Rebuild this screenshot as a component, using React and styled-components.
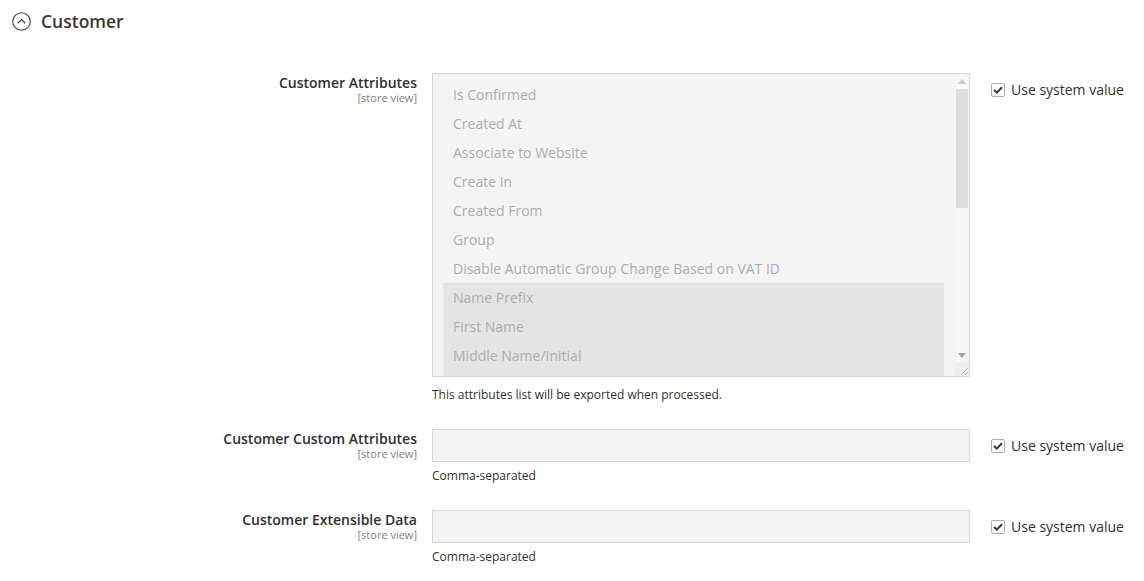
import React from "react";
import styled, { createGlobalStyle } from "styled-components";

const Global = createGlobalStyle`
  html, body { margin: 0; padding: 0; background: #fff; }
  body { font-family: "Open Sans", "Noto Sans", sans-serif; color: #303030; }
`;

const Page = styled.div`
  width: 1144px;
  min-height: 581px;
  background: #fff;
`;

const Header = styled.div`
  display: flex;
  align-items: center;
  gap: 10px;
  height: 42px;
  padding-left: 12px;
`;

const Title = styled.div`
  font-size: 17.5px;
  font-weight: 600;
  color: #41362f;
  line-height: 20px;
`;

const Fieldset = styled.div`
  margin-top: 31px;
  display: flex;
  flex-direction: column;
  gap: 25px;
`;

const Field = styled.div`
  display: grid;
  grid-template-columns: 432px 538px 1fr;
  align-items: start;
`;

const LabelCell = styled.div`
  padding-right: 15px;
  padding-top: 1px;
  text-align: right;
`;

const LabelText = styled.div`
  font-size: 14px;
  font-weight: 600;
  line-height: 18px;
  color: #303030;
`;

const Scope = styled.div`
  font-size: 11px;
  line-height: 13px;
  color: #808080;
  margin-top: -1px;
`;

const Control = styled.div`
  display: flex;
  flex-direction: column;
`;

const SelectBox = styled.div`
  height: 302px;
  border: 1px solid #d6d6d6;
  background: #f4f4f4;
  display: flex;
  overflow: hidden;
`;

const OptionList = styled.div`
  flex: 1;
  display: flex;
  flex-direction: column;
  padding: 6px 11px 0 10px;
  overflow: hidden;
`;

const Option = styled.div`
  flex: none;
  height: 29px;
  line-height: 29px;
  padding-left: 10px;
  font-size: 14px;
  color: #adadad;
  white-space: nowrap;
  background: ${(p) => (p.$selected ? "#e4e4e4" : "transparent")};
`;

const SelectedRest = styled.div`
  flex: 1;
  background: #e4e4e4;
`;

const Scrollbar = styled.div`
  width: 14px;
  display: flex;
  flex-direction: column;
  align-items: stretch;
  background: #f6f6f6;
`;

const ScrollArrow = styled.div`
  height: 14px;
  display: flex;
  align-items: center;
  justify-content: center;
`;

const Track = styled.div`
  flex: 1;
  padding: 1px 1px;
`;

const Thumb = styled.div`
  height: 119px;
  background: #dcdcdc;
`;

const Corner = styled.div`
  height: 14px;
  background: #eeeeee;
  display: flex;
  align-items: flex-end;
  justify-content: flex-end;
`;

const TextInput = styled.div`
  height: 31px;
  border: 1px solid #d6d6d6;
  background: #f4f4f4;
`;

const Note = styled.div`
  font-size: 12px;
  line-height: 18px;
  color: #303030;
  margin-top: ${(p) => p.$gap}px;
`;

const UseDefault = styled.label`
  display: flex;
  align-items: center;
  gap: 6px;
  padding-left: 21px;
  padding-top: 8px;
  font-size: 14px;
  line-height: 18px;
  color: #303030;
  white-space: nowrap;
`;

const Box = styled.span`
  width: 14px;
  height: 14px;
  box-sizing: border-box;
  border: 1px solid #adadad;
  border-radius: 2px;
  background: #fff;
  display: flex;
  align-items: center;
  justify-content: center;
`;

const CollapseIcon = () => (
  <svg width="19" height="19" viewBox="0 0 19 19">
    <circle cx="9.5" cy="9.5" r="8.8" fill="none" stroke="#41362f" strokeWidth="1.1" />
    <path d="M5.8 11.2 L9.5 7.6 L13.2 11.2" fill="none" stroke="#41362f" strokeWidth="1.2" />
  </svg>
);

const Check = () => (
  <svg width="10" height="8" viewBox="0 0 10 8">
    <path d="M1 4 L3.8 6.6 L9 1.2" fill="none" stroke="#41362f" strokeWidth="2" />
  </svg>
);

const Tri = ({ up }) => (
  <svg width="8" height="5" viewBox="0 0 8 5">
    <path d={up ? "M0 5 L4 0 L8 5 Z" : "M0 0 L8 0 L4 5 Z"} fill={up ? "#c8c8c8" : "#a3a3a3"} />
  </svg>
);

const Grip = () => (
  <svg width="10" height="10" viewBox="0 0 10 10">
    <path d="M9 2 L2 9 M9 6 L6 9" stroke="#b5b5b5" strokeWidth="1" />
  </svg>
);

const options = [
  ["Is Confirmed", false],
  ["Created At", false],
  ["Associate to Website", false],
  ["Create In", false],
  ["Created From", false],
  ["Group", false],
  ["Disable Automatic Group Change Based on VAT ID", false],
  ["Name Prefix", true],
  ["First Name", true],
  ["Middle Name/Initial", true],
];

const UseSystem = () => (
  <UseDefault>
    <Box>
      <Check />
    </Box>
    Use system value
  </UseDefault>
);

export default function App() {
  return (
    <Page>
      <Global />
      <Header>
        <CollapseIcon />
        <Title>Customer</Title>
      </Header>
      <Fieldset>
        <Field>
          <LabelCell>
            <LabelText>Customer Attributes</LabelText>
            <Scope>[store view]</Scope>
          </LabelCell>
          <Control>
            <SelectBox>
              <OptionList>
                {options.map(([o, s]) => (
                  <Option key={o} $selected={s}>
                    {o}
                  </Option>
                ))}
                <SelectedRest />
              </OptionList>
              <Scrollbar>
                <ScrollArrow>
                  <Tri up />
                </ScrollArrow>
                <Track>
                  <Thumb />
                </Track>
                <ScrollArrow>
                  <Tri />
                </ScrollArrow>
                <Corner>
                  <Grip />
                </Corner>
              </Scrollbar>
            </SelectBox>
            <Note $gap={9}>This attributes list will be exported when processed.</Note>
          </Control>
          <UseSystem />
        </Field>
        <Field>
          <LabelCell>
            <LabelText>Customer Custom Attributes</LabelText>
            <Scope>[store view]</Scope>
          </LabelCell>
          <Control>
            <TextInput />
            <Note $gap={5}>Comma-separated</Note>
          </Control>
          <UseSystem />
        </Field>
        <Field>
          <LabelCell>
            <LabelText>Customer Extensible Data</LabelText>
            <Scope>[store view]</Scope>
          </LabelCell>
          <Control>
            <TextInput />
            <Note $gap={5}>Comma-separated</Note>
          </Control>
          <UseSystem />
        </Field>
      </Fieldset>
    </Page>
  );
}
